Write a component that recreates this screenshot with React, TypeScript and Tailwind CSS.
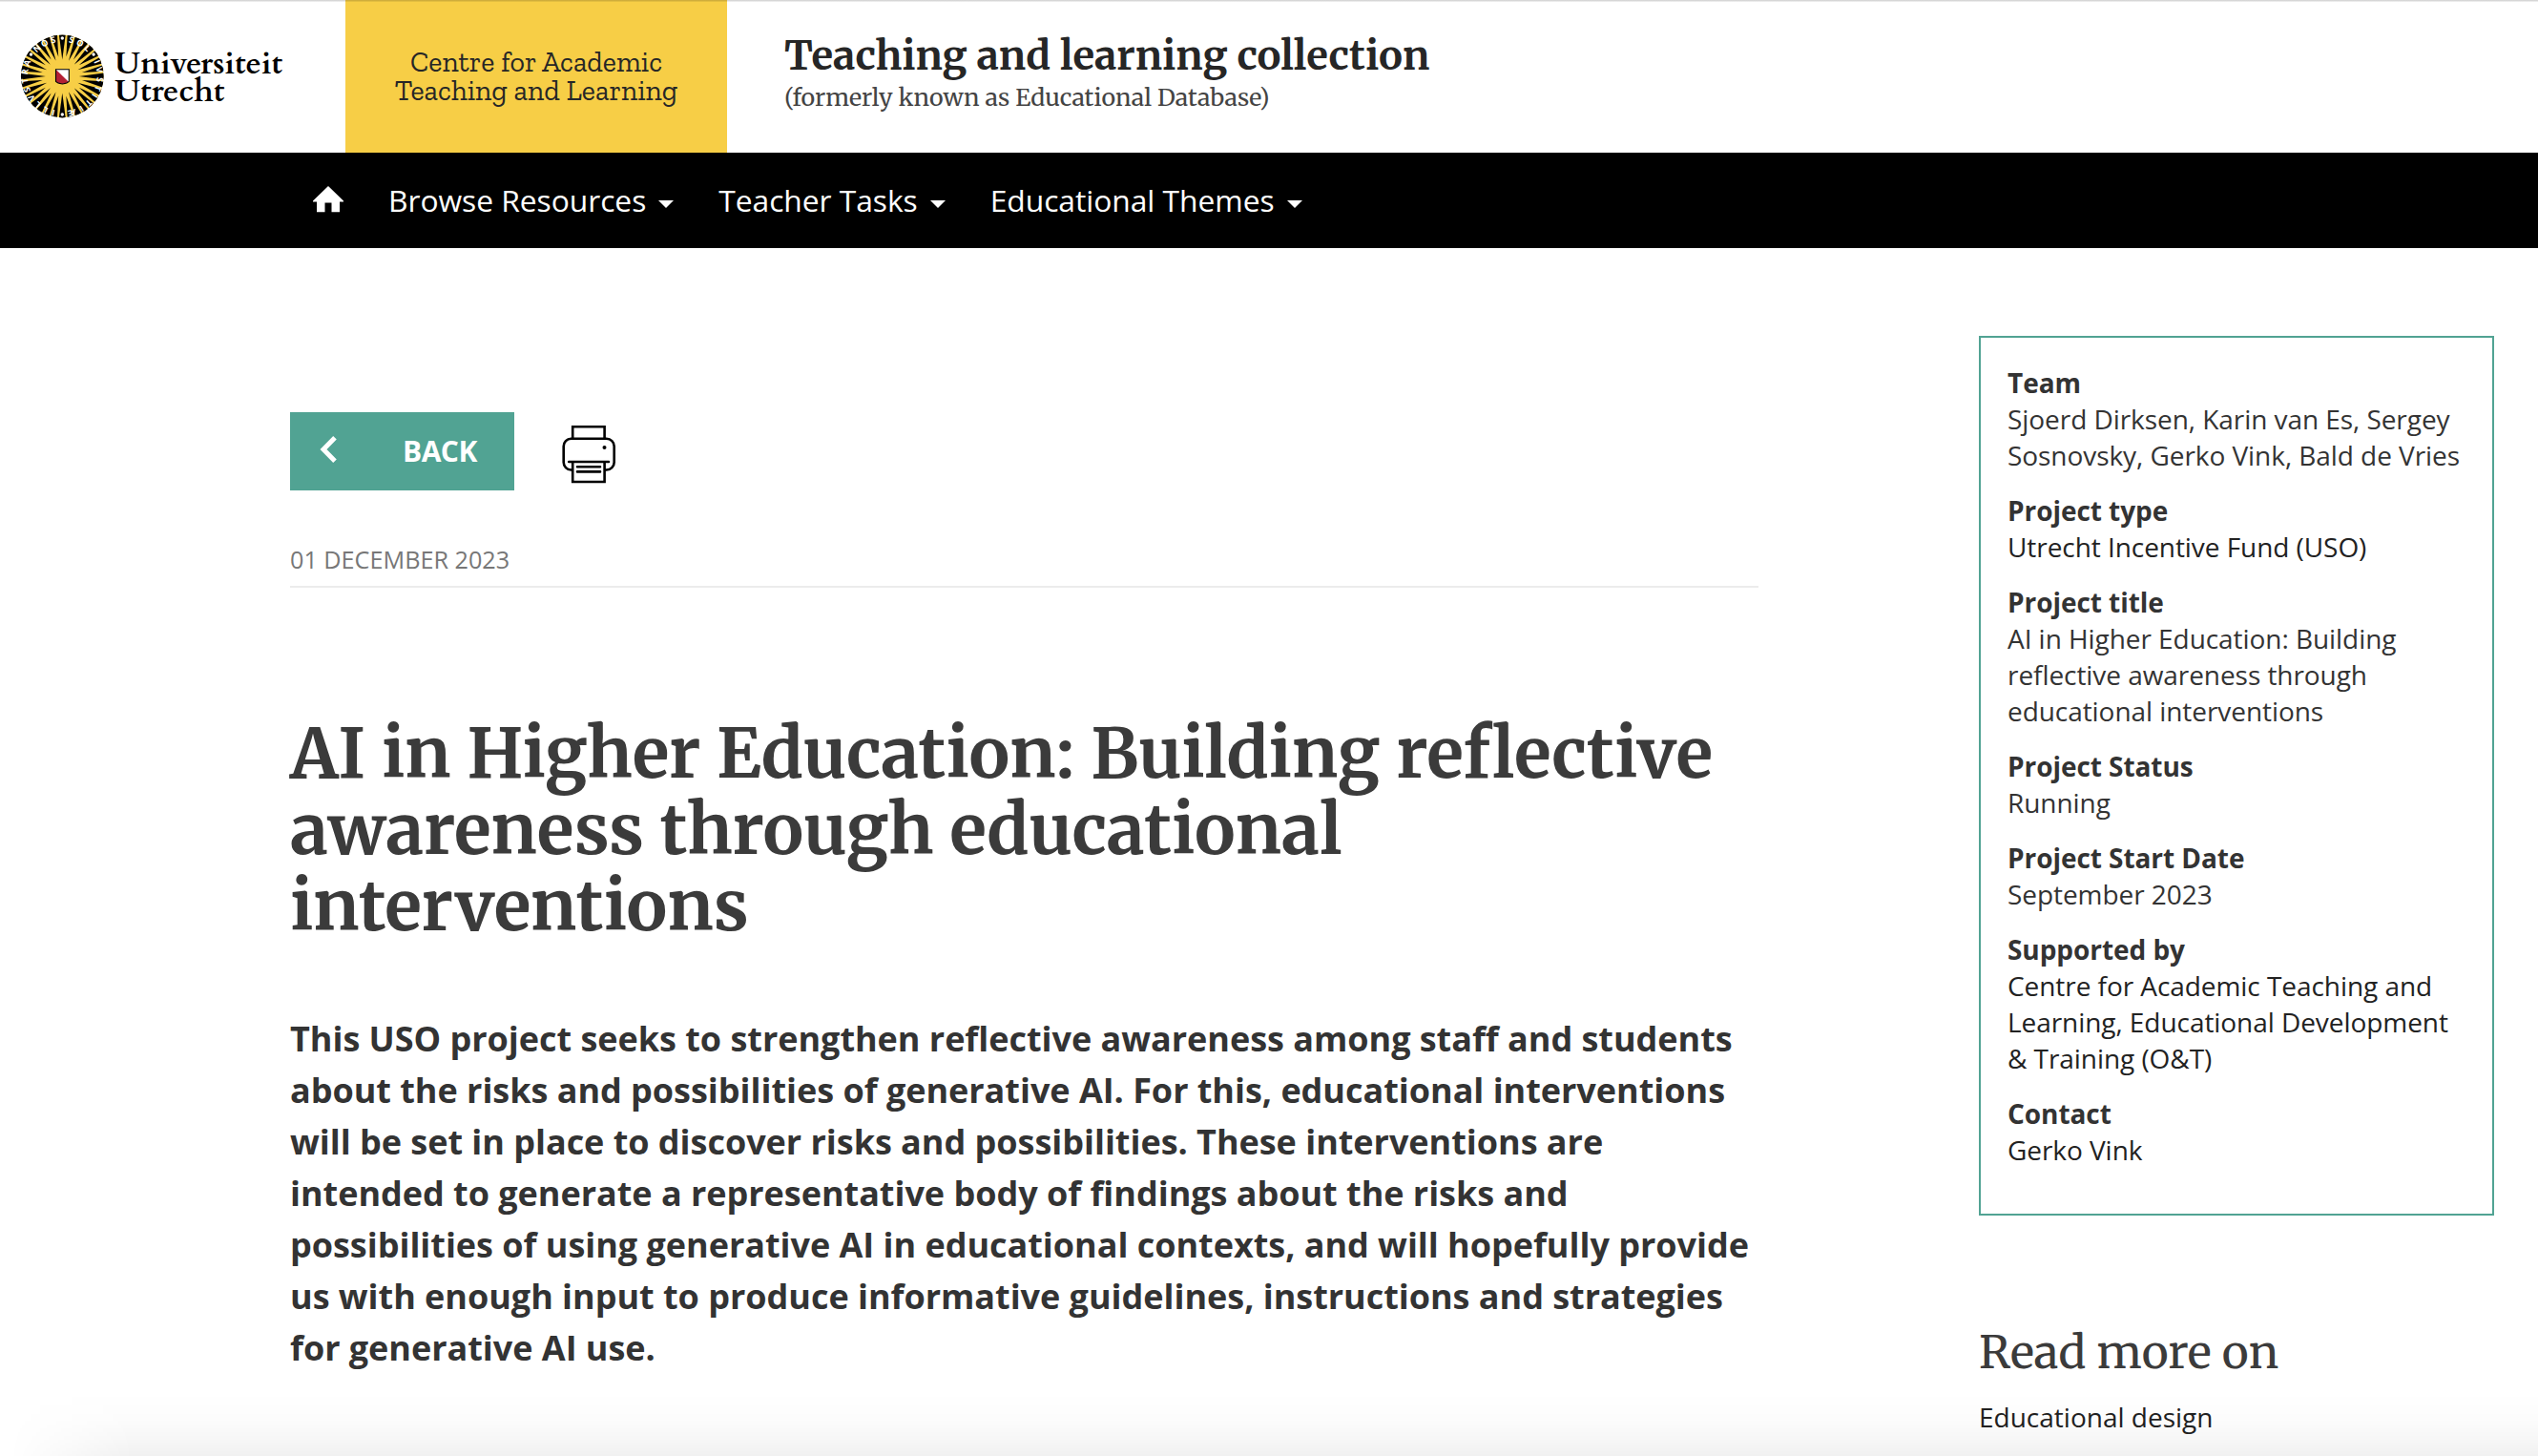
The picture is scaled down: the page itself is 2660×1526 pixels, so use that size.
import type { ReactNode } from "react";

const WEDGES = Array.from({ length: 32 }, (_, i) => i * 11.25);

const MOTTO: [string, number][] = [
  ["S", 14], ["O", 28], ["L", 42],
  ["I", 67], ["V", 80], ["S", 95], ["T", 109], ["I", 121], ["T", 135], ["I", 149], ["Æ", 165],
  ["I", 194], ["L", 207], ["L", 221], ["V", 235], ["S", 249], ["T", 263], ["R", 277], ["A", 291],
  ["N", 318], ["O", 332], ["S", 346],
];

const DOTS = [0, 55, 180, 305];

function SunLogo() {
  return (
    <svg viewBox="-44.3 -44 88 88" className="size-[88px] shrink-0">
      <defs>
        <clipPath id="disc">
          <circle r="43.4" />
        </clipPath>
      </defs>
      <g clipPath="url(#disc)">
        <circle r="43.4" fill="#f7ce46" />
        {WEDGES.map((a, i) => (
          <path key={a} d={i % 2 ? "M0-21 3.3-44H-3.3Z" : "M0-17.5 3.5-44H-3.5Z"} transform={`rotate(${a})`} fill="#000" />
        ))}
        {MOTTO.map(([c, a]) => (
          <text
            key={a}
            transform={`rotate(${a})`}
            y="-36.3"
            textAnchor="middle"
            fill="#fff"
            className="font-['Open_Sans',sans-serif] text-[9px] font-bold"
          >
            {c}
          </text>
        ))}
        {DOTS.map((a) => (
          <circle key={a} cy="-40" r="1.7" fill="#fff" transform={`rotate(${a})`} />
        ))}
      </g>
      <path d="M-6.8-7.2H7V5.3Q5.5 7 .1 8-5.3 7-6.8 5.3Z" fill="#fff" />
      <path d="M-6.8-7.2 6.6 5.8Q4 7.3.1 8-5.3 7-6.8 5.3Z" fill="#b32034" />
      <path d="M-6.8-7.2H7V5.3Q5.5 7 .1 8-5.3 7-6.8 5.3Z" fill="none" stroke="#000" strokeWidth="1.1" />
    </svg>
  );
}

function HomeIcon() {
  return (
    <svg viewBox="0 0 32 28" className="mb-0.5 h-7 w-8" fill="#fff">
      <path d="M16 0 32 15.6V16.5H28V27.3H19.5V17.5H12.5V27.3H4V16.5H0V15.6Z" />
    </svg>
  );
}

function PrinterIcon() {
  return (
    <svg viewBox="0 0 57 62" className="h-[62px] w-[57px]" fill="none" stroke="#000" strokeWidth="2.6">
      <path d="M11.2 15V2.3H44.6V15" />
      <path d="M11.2 47.5H9.5A8 8 0 0 1 1.7 39.5V22.8A8 8 0 0 1 9.5 14.8H46.7A8 8 0 0 1 54.7 22.8V39.5A8 8 0 0 1 46.7 47.5H44.6" />
      <path d="M11.2 39V60H44.6V39" />
      <path d="M7.2 39H49M16 44.2H40M16 49.4H40" strokeLinecap="round" />
      <circle cx="44.5" cy="24" r="2" fill="#000" stroke="none" />
    </svg>
  );
}

function NavItem({ children }: { children: ReactNode }) {
  return (
    <a className="flex items-center gap-[13px]">
      {children}
      <svg viewBox="0 0 16 8" className="mt-2 h-2 w-4" fill="#fff">
        <path d="M0 0H16L8 8Z" />
      </svg>
    </a>
  );
}

const DETAILS: { label: string; lines: string[]; link?: boolean }[] = [
  { label: "Team", lines: ["Sjoerd Dirksen, Karin van Es, Sergey", "Sosnovsky, Gerko Vink, Bald de Vries"] },
  { label: "Project type", lines: ["Utrecht Incentive Fund (USO)"], link: true },
  { label: "Project title", lines: ["AI in Higher Education: Building", "reflective awareness through", "educational interventions"] },
  { label: "Project Status", lines: ["Running"] },
  { label: "Project Start Date", lines: ["September 2023"] },
  {
    label: "Supported by",
    lines: ["Centre for Academic Teaching and", "Learning, Educational Development", "& Training (O&T)"],
    link: true,
  },
  { label: "Contact", lines: ["Gerko Vink"], link: true },
];

const INTRO = [
  "This USO project seeks to strengthen reflective awareness among staff and students",
  "about the risks and possibilities of generative AI. For this, educational interventions",
  "will be set in place to discover risks and possibilities. These interventions are",
  "intended to generate a representative body of findings about the risks and",
  "possibilities of using generative AI in educational contexts, and will hopefully provide",
  "us with enough input to produce informative guidelines, instructions and strategies",
  "for generative AI use.",
];

export default function App() {
  return (
    <div className="relative h-[1526px] w-[2660px] overflow-hidden bg-white font-['Open_Sans','Noto_Sans',sans-serif] text-[#333]">
      <header className="flex h-40 whitespace-nowrap">
        <div className="flex w-[362px] items-center gap-[11px] pl-[21px]">
          <SunLogo />
          <p className="pt-0.5 font-['Cardo','Liberation_Serif',serif] text-[33px] leading-[29px] font-bold text-black">
            Universiteit
            <br />
            Utrecht
          </p>
        </div>
        <div className="flex w-[400px] items-center justify-center bg-[#f7ce46]">
          <p className="text-center font-['Zilla_Slab','DejaVu_Serif_Condensed',serif] text-[30px] leading-[30px] text-[#262626]">
            Centre for Academic
            <br />
            Teaching and Learning
          </p>
        </div>
        <div className="flex flex-col pt-8 pl-[60px] font-['Merriweather','Noto_Serif','DejaVu_Serif_Condensed',serif]">
          <p className="text-[41.8px] leading-[52px] font-bold text-[#262626]">Teaching and learning collection</p>
          <p className="text-[25px] leading-[36px] text-[#444]">(formerly known as Educational Database)</p>
        </div>
      </header>

      <nav className="flex h-[100px] items-center gap-[47px] bg-black pl-[328px] text-[31.8px] leading-[44px] tracking-[-0.05px] whitespace-nowrap text-white">
        <HomeIcon />
        <NavItem>Browse Resources</NavItem>
        <NavItem>Teacher Tasks</NavItem>
        <NavItem>Educational Themes</NavItem>
      </nav>

      <div className="flex justify-between pr-[46px] pl-[304px]">
        <main className="w-[1539px] pt-[172px] whitespace-nowrap">
          <div className="flex items-start">
            <a className="flex h-[82px] w-[235px] items-center bg-[#51a393] pl-[31px] text-[30px] leading-10 font-bold text-white">
              <svg viewBox="0 0 18 28" className="mb-1 h-7 w-[18px]" fill="none" stroke="#fff" strokeWidth="5">
                <path d="M16 1.8 4 14 16 26.2" />
              </svg>
              <span className="pl-[69px] tracking-[-0.5px]">BACK</span>
            </a>
            <div className="pt-[13px] pl-[50px]">
              <PrinterIcon />
            </div>
          </div>
          <p className="mt-[53px] h-[49px] border-b-2 border-[#ececec] text-[25.2px] leading-[38px] text-[#777]">
            01 DECEMBER 2023
          </p>
          <h1 className="mt-[134px] font-['Merriweather','Noto_Serif','DejaVu_Serif_Condensed',serif] text-[71.5px] leading-[80px] font-bold tracking-[-0.08px] text-[#3b3b3b]">
            AI in Higher Education: Building reflective
            <br />
            awareness through educational
            <br />
            interventions
          </h1>
          <p className="mt-[72px] text-[36px] leading-[54px] font-bold tracking-[-0.03px]">
            {INTRO.map((line) => (
              <span key={line} className="block">
                {line}
              </span>
            ))}
          </p>
        </main>

        <aside className="w-[540px] pt-[92px] whitespace-nowrap">
          <dl className="flex flex-col gap-5 border-2 border-[#51a393] px-7 pt-7 pb-12 text-[28px] leading-[38px] tracking-[-0.06px]">
            {DETAILS.map(({ label, lines, link }) => (
              <div key={label}>
                <dt className="font-bold">{label}</dt>
                <dd className={link ? "text-[#222]" : "text-[#333]"}>
                  {lines.map((line) => (
                    <span key={line} className="block">
                      {line}
                    </span>
                  ))}
                </dd>
              </div>
            ))}
          </dl>
          <h2 className="mt-[113px] font-['Merriweather','Noto_Serif','DejaVu_Serif_Condensed',serif] text-[47.7px] leading-[60px] text-[#3b3b3b]">
            Read more on
          </h2>
          <a className="mt-[19px] block text-[28px] leading-[38px] text-[#222]">Educational design</a>
        </aside>
      </div>

      <div className="absolute inset-x-0 top-0 h-0.5 bg-linear-to-b from-black/16 from-50% to-black/8 to-50%" />
      <div className="absolute inset-x-0 bottom-0 h-[66px] bg-[linear-gradient(to_bottom,transparent,rgba(0,0,0,0.012)_40%,rgba(0,0,0,0.03)_72%,rgba(0,0,0,0.055))] [mask-image:linear-gradient(to_right,transparent_10px,black_140px)]" />
    </div>
  );
}
